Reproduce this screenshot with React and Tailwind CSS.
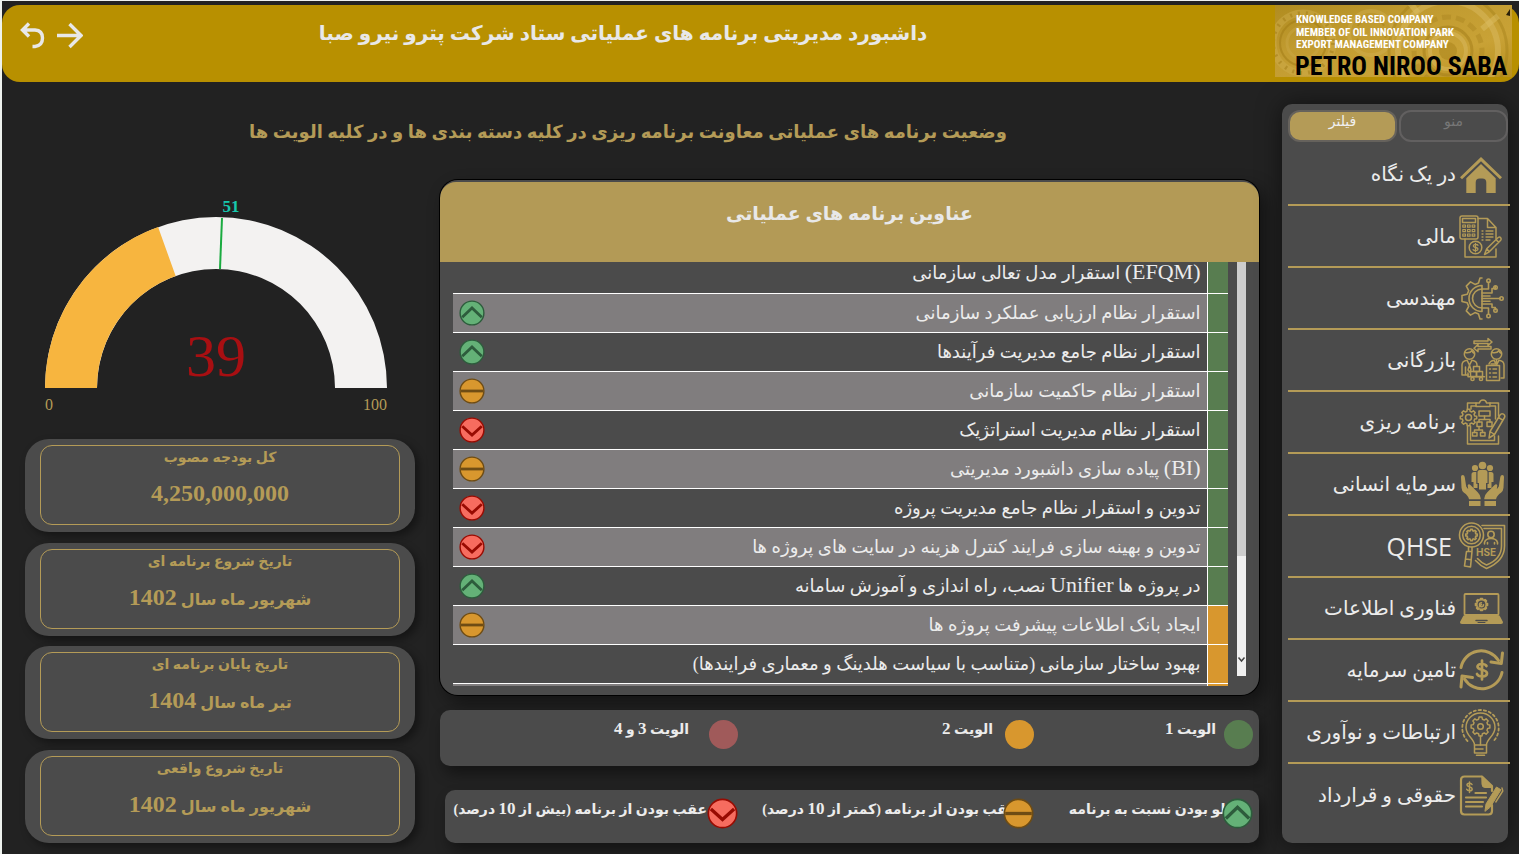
import React from "react";

const GOLD = "#b49b57";

function Latin({ children, className = "" }) {
  return <bdi className={"font-['Liberation_Serif',serif] leading-none " + className}>{children}</bdi>;
}

function gear(cx, cy, r, depth, teeth) {
  const pts = [];
  const step = (Math.PI * 2) / teeth;
  for (let i = 0; i < teeth; i++) {
    const a = i * step;
    [
      [-0.32, r - depth],
      [-0.2, r],
      [0.2, r],
      [0.32, r - depth],
    ].forEach(([o, rad]) => {
      pts.push((cx + Math.cos(a + o * step) * rad).toFixed(2) + "," + (cy + Math.sin(a + o * step) * rad).toFixed(2));
    });
  }
  return pts.join(" ");
}

function Icon({ children, width = 1.6 }) {
  return (
    <svg viewBox="0 0 48 48" className="size-12 shrink-0" fill="none" stroke={GOLD} strokeWidth={width} strokeLinecap="round" strokeLinejoin="round" aria-hidden="true">
      {children}
    </svg>
  );
}

const HomeIcon = () => (
  <Icon>
    <g stroke="none" fill={GOLD}>
      <path d="M23 7 2 27.300l2 1.900L23 11.200l19 18 2-1.900z" />
      <path d="M23 14 8.300 28.300V43h9.400V32.500q0-4 4-4h2.600q4 0 4 4V43h9.400V28.300z" />
    </g>
  </Icon>
);

const FinanceIcon = () => (
  <Icon width={1.5}>
    <rect x="2" y="4" width="18" height="23" rx="2" />
    <rect x="4.500" y="6.500" width="13" height="4" />
    {[13, 17.5, 22].map((y) => [4.8, 9.5, 14.2].map((x) => <rect key={x + "-" + y} x={x} y={y} width="2.600" height="2.200" strokeWidth="1.200" />))}
    <path d="M20 6.500h9.500l8.500 9v11M29.500 6.500v9H38M7 27v18h31v-8" />
    <path d="M24 19h1M28 19h7M24 22h1M28 22h7M24 25h1M28 25h7M24 28h1M28 28h4" strokeWidth="1.300" />
    <circle cx="17.500" cy="35.500" r="6.300" />
    <path d="M20 33.300c-.8-1.200-4.700-1.300-4.700.7s4.700 1 4.700 3-4 2-4.900.600M17.500 31.300v8.500" strokeWidth="1.300" />
    <path d="m26.500 42.500 2.200-5.700 11.500-11.300q1.500-1 2.500.2t0 2.500L31.300 39.800zM28.700 36.800l2.600 3M38 27.600l2.700 2.600" />
  </Icon>
);

const EngineeringIcon = () => (
  <Icon width={1.6}>
    <path d="M24 4h-2l-1.500 5-3.500 1.400-4.500-2.500-4.200 4.200 2.400 4.600-1.500 3.500L4 21.600v5.800l5.200 1.400 1.500 3.600-2.400 4.500 4.200 4.200 4.500-2.500 3.500 1.400 1.500 5h2" />
    <path d="M24 11.500a13 13 0 0 0 0 26M24 15a9.500 9.500 0 0 0 0 19M24 11.500v26" />
    <path d="M24 15h6.500V8.500M24 19h10v-4.500h3.300v-2M24 24.500h18M24 30h10v3.500h3.300v2.200M24 34h6.500v6.300M24 22h8M24 27.300h8" />
    <circle cx="30.500" cy="6.700" r="1.700" /><circle cx="37.500" cy="13.500" r="1.700" /><circle cx="43.500" cy="24.500" r="1.700" />
    <circle cx="37.500" cy="36.500" r="1.700" /><circle cx="30.500" cy="42" r="1.700" />
  </Icon>
);

const TradeIcon = () => (
  <Icon width={1.5}>
    <path d="M16 5h14V2.500L34 6l-4 3.300V7.500H16zM33 10.500H20V8.500l-4 3.800 4 3.400V13h13z" />
    <circle cx="11.500" cy="18" r="5.200" /><path d="M7 16.500q5 1 7-2 .5 2.500 2.500 2.500" />
    <circle cx="38.500" cy="18" r="5.200" /><path d="M34 16.500q5 1 7-2 .5 2.500 2.500 2.500" />
    <path d="M10 39H4V29q0-4 5-4.800l2.500 5 2.500-5q5 .8 5 4.800v1M7.500 31v8M11.500 29l-1.500 5 1.500 2 1.500-2z" />
    <path d="M31 28q1-3.200 5-3.800l2.500 5 2.500-5q5 .8 5 4.800v13h-3M38.500 24v4" />
    <rect x="28.500" y="29.500" width="13" height="15" /><path d="M31.500 33h1M35 33h3.500M31.500 37h1M35 37h3.500M31.500 41h1M35 41h3.500M33 28h4" />
    <rect x="15.500" y="30.500" width="6" height="5" /><rect x="12.500" y="35.500" width="6" height="5" /><rect x="18.500" y="35.500" width="6" height="5" />
    <path d="M10 37v3.700h16.500" /><circle cx="14.500" cy="43" r="1.600" /><circle cx="23" cy="43" r="1.600" />
  </Icon>
);

const PlanningIcon = () => (
  <Icon width={1.500}>
    <path d="M18 5H9.500v6M9.500 28v18h31V38M32 5h8.500v13M12.500 28v14.500h24V38M37.500 21V8H33M18 8h-5v3" />
    <path d="M18 8.500V5h3.500q.5-3 3.500-3t3.500 3H32v3.500z" />
    <polygon points={gear(10.5, 19.5, 8.3, 1.9, 8)} /><circle cx="10.500" cy="19.500" r="3" />
    <rect x="21" y="13" width="11" height="5" /><path d="M26.500 18v3.500M21 24v-2.500h11V24M21 29v3M16.500 34.500V32h8v2.500" />
    <rect x="19" y="24" width="5" height="4.500" /><rect x="29" y="24" width="5" height="4.500" />
    <rect x="14.500" y="34.500" width="4.500" height="3.500" /><rect x="22.500" y="34.500" width="4.500" height="3.500" />
    <path d="m31 40 1-6.500L42 17q1.500-2 3.500-.8t1 3.300L36.500 36.500zM32 33.500l4.500 3M40.500 19.500l4.300 2.700" />
  </Icon>
);

const PeopleIcon = () => (
  <Icon>
    <g stroke="none" fill={GOLD}>
      <circle cx="24.500" cy="5.500" r="3.800" /><circle cx="17" cy="8" r="3.100" /><circle cx="32" cy="8" r="3.100" />
      <path d="M19.500 12.500q0-2.500 2.500-2.500h5q2.500 0 2.500 2.500V23H28v6.500h-7V23h-1.500zM13.500 14.500q0-2.500 2.500-2.500h2.300v12h1.200v4h-4v-6h-2zM35.500 14.500q0-2.500-2.500-2.500h-2.300v12h-1.200v4h4v-6h2z" />
      <path d="M3 17q0-2 1.700-2t2 2l1.500 9.500 2 2.800-.5-4q1-2 3 0l7 7q3 3 3 6v1H11q-1-4-5-6.500-2.200-1.500-2.500-5zM46 17q0-2-1.700-2t-2 2l-1.500 9.500-2 2.800.5-4q-1-2-3 0l-7 7q-3 3-3 6v1H38q1-4 5-6.500 2.200-1.500 2.500-5z" />
      <path d="M11 41h11.500v5H11zM26.500 41H38v5H26.500z" />
    </g>
  </Icon>
);

const QhseIcon = () => (
  <Icon width={1.600}>
    <path d="M24 3.500h22.500V24q0 15-18 22.500-6-2.500-11-8" /><path d="M26 6.500h17.500V24q0 13-15 19-5-2-9-6.500" />
    <circle cx="13.500" cy="13" r="12" /><circle cx="13.500" cy="13" r="8.800" />
    <polygon points={gear(13.5, 13, 5.8, 1.3, 8)} />
    <path d="M10.500 25v4M14 25v4M8.500 29.500h5.500L12.500 45l-6-1zM8 37l5 .8" />
    <circle cx="33" cy="12.500" r="3.200" /><path d="M26.500 22v-1.500q1-4 6.500-4t6.500 4V22M29.500 22v-1.500M36.500 22v-1.500" />
    <text x="18" y="34" direction="ltr" fontSize="10" fontWeight="700" fill={GOLD} stroke="none" fontFamily="Inter, sans-serif">HSE</text>
  </Icon>
);

const LaptopIcon = () => (
  <Icon width={1.800}>
    <rect x="6.500" y="10" width="34" height="21" rx="1" />
    <path d="M5.500 31.500h36l3.500 6.500q.3 2-2 2H4q-2.300 0-2-2z" fill={GOLD} stroke="none" />
    <path d="M18 36.500h11" stroke="#4b4b4b" strokeWidth="1.500" /><path d="M20 38.500h7" stroke="#4b4b4b" strokeWidth="1" />
    <polygon points={gear(23.5, 20.5, 6, 1.3, 8)} fill={GOLD} />
    <circle cx="23.500" cy="20.500" r="3.900" fill="#4b4b4b" stroke="none" />
    <path d="m21 23 2.500-2.500m0-1.800a2 2 0 1 0 2 2" strokeWidth="1.500" />
  </Icon>
);

const CapitalIcon = () => (
  <Icon width={3}>
    <path d="M3 21.500A20.500 20.500 0 0 1 40.500 14.500M44 26.500A20.500 20.500 0 0 1 6.500 33" />
    <path d="m33 16 10.300 1.500L44.500 7M14.500 31.500 4 30 3 41" />
    <path d="M28.500 20c-1.500-2.800-9-2.800-9 .8s9.500 2.200 9.500 6.500-8.500 4-10 .7M24 14.500v19" strokeWidth="2.700" />
  </Icon>
);

const IdeaIcon = () => (
  <Icon width={1.500}>
    <path d="M9.500 33A18.500 18.500 0 0 1 4.300 20C4.300 10 12 2 22.500 2S40.700 10 40.700 20a18.500 18.500 0 0 1-5.200 13" strokeDasharray="2.300 2.800" strokeWidth="1.800" />
    <path d="M16.500 37c0-6-8.500-9-8.500-17.500a14.500 14.500 0 0 1 29 0C37 28 28.500 31 28.500 37z" />
    <polygon points={gear(22.5, 18.5, 9.5, 2, 8)} /><circle cx="22.500" cy="18.500" r="2.800" />
    <path d="M22.500 28v9M16.500 37v8h12v-8M17 41h8M18.500 47.300h8" />
  </Icon>
);

const ContractIcon = () => (
  <Icon width={2.200}>
    <path d="M34 34v6q0 3.500-3.500 3.500h-24Q3 43.500 3 40V9q0-3.500 3.500-3.500H24L34 15v5" />
    <path d="M24 5.500 34 15v1.500h-7q-3 0-3-3z" fill={GOLD} strokeWidth="1" />
    <path d="M17.500 22H28M8 26.500h20M8 31h17M8 35.500h16" />
    <path d="M14 13.500c-.8-1.700-5-1.700-5 .5s5.200 1.400 5.200 3.900-4.700 2.300-5.500.3M11.500 11v10.500" strokeWidth="1.500" />
    <path d="m27 40 1-7 10.500-17 4.500 2.800-10.500 17z" fill={GOLD} strokeWidth="1" /><path d="m44 17 .8 3-7 11" strokeWidth="1.400" />
  </Icon>
);

const MENU = [
  ["در یک نگاه", HomeIcon],
  ["مالی", FinanceIcon],
  ["مهندسی", EngineeringIcon],
  ["بازرگانی", TradeIcon],
  ["برنامه ریزی", PlanningIcon],
  ["سرمایه انسانی", PeopleIcon],
  ["QHSE", QhseIcon],
  ["فناوری اطلاعات", LaptopIcon],
  ["تامین سرمایه", CapitalIcon],
  ["ارتباطات و نوآوری", IdeaIcon],
  ["حقوقی و قرارداد", ContractIcon],
];

const STATUS = {
  up: { fill: "#64b177", stroke: "#2d5c3c", d: "M3.500 18.500 14 8.500l10.500 10", label: "جلو" },
  mid: { fill: "#d8972e", stroke: "#6e4c14", d: "M2 14h24", label: "عقب کمتر از 10 درصد" },
  down: { fill: "#f76c5f", stroke: "#980b02", d: "M3.500 10 14 19.500 24.500 10", label: "عقب بیش از 10 درصد" },
};

function Status({ kind, className }) {
  const s = STATUS[kind];
  return (
    <svg viewBox="0 0 28 28" className={className} fill="none" stroke={s.stroke} role="img" aria-label={s.label}>
      <circle cx="14" cy="14" r="12.800" fill={s.fill} strokeWidth="1.500" />
      <path d={s.d} strokeWidth="3" />
    </svg>
  );
}

const ROWS = [
  { t: <><Latin className="text-[22px]">(EFQM)</Latin> استقرار مدل تعالی سازمانی</>, s: null, p: 1 },
  { t: "استقرار نظام ارزیابی عملکرد سازمانی", s: "up", p: 1 },
  { t: "استقرار نظام جامع مدیریت فرآیندها", s: "up", p: 1 },
  { t: "استقرار نظام حاکمیت سازمانی", s: "mid", p: 1 },
  { t: "استقرار نظام مدیریت استراتژیک", s: "down", p: 1 },
  { t: <><Latin className="text-[22px]">(BI)</Latin> پیاده سازی داشبورد مدیریتی</>, s: "mid", p: 1 },
  { t: "تدوین و استقرار نظام جامع مدیریت پروژه", s: "down", p: 1 },
  { t: "تدوین و بهینه سازی فرایند کنترل هزینه در سایت های پروژه ها", s: "down", p: 1 },
  { t: <>در پروژه ها <Latin className="text-[22px]">Unifier</Latin> نصب، راه اندازی و آموزش سامانه</>, s: "up", p: 1 },
  { t: "ایجاد بانک اطلاعات پیشرفت پروژه ها", s: "mid", p: 2 },
  { t: "بهبود ساختار سازمانی (متناسب با سیاست هلدینگ و معماری فرایندها)", s: null, p: 2 },
];

const CARDS = [
  ["کل بودجه مصوب", <Latin className="text-[24px]">4,250,000,000</Latin>],
  ["تاریخ شروع برنامه ای", <>شهریور ماه سال <Latin className="text-[24px]">1402</Latin></>],
  ["تاریخ پایان برنامه ای", <>تیر ماه سال <Latin className="text-[24px]">1404</Latin></>],
  ["تاریخ شروع واقعی", <>شهریور ماه سال <Latin className="text-[24px]">1402</Latin></>],
];

function Logo() {
  return (
    <svg viewBox="0 0 237 72" className="h-[72px] w-[237px] shrink-0 overflow-visible" role="img" aria-label="Petro Niroo Saba">
      <defs>
        <linearGradient id="plate" x1="0" x2="1" y1="0" y2="1">
          <stop offset="0" stopColor="#b08c20" />
          <stop offset=".35" stopColor="#c19b30" />
          <stop offset=".7" stopColor="#c9a236" />
          <stop offset="1" stopColor="#b8901f" />
        </linearGradient>
        <clipPath id="frame"><rect width="237" height="72" /></clipPath>
      </defs>
      <g clipPath="url(#frame)">
        <rect width="237" height="72" fill="url(#plate)" />
        <g fill="none">
          <circle cx="28" cy="38" r="30" stroke="#cdab4a" strokeWidth="7" opacity=".5" />
          <circle cx="28" cy="38" r="23" stroke="#9f7a14" strokeWidth="2" opacity=".5" />
          <circle cx="28" cy="38" r="16" stroke="#cdab4a" strokeWidth="3" opacity=".4" />
          <circle cx="28" cy="38" r="30" stroke="#9f7a14" strokeWidth="4" strokeDasharray="2 6" opacity=".5" />
          <circle cx="96" cy="28" r="22" stroke="#d2b256" strokeWidth="4" opacity=".4" />
          <circle cx="96" cy="28" r="15" stroke="#9f7a14" strokeWidth="2" strokeDasharray="5 4" opacity=".4" />
          <circle cx="173" cy="46" r="9" fill="#a8811a" opacity=".5" />
          <circle cx="173" cy="46" r="18" stroke="#d9ba60" strokeWidth="4" opacity=".5" />
          <circle cx="173" cy="46" r="24" stroke="#a17c17" strokeWidth="3" opacity=".5" />
          <circle cx="173" cy="46" r="34" stroke="#a8831d" strokeWidth="5" strokeDasharray="9 5" opacity=".4" />
          <circle cx="173" cy="46" r="50" stroke="#d9ba60" strokeWidth="6" opacity=".5" />
          <circle cx="173" cy="46" r="59" stroke="#a17c17" strokeWidth="3" opacity=".4" />
          <path d="m207 24 16-13M143 8l-8-10" stroke="#dcbd62" strokeWidth="6" opacity=".5" />
        </g>
        <path d="M235 4v7l-4-1z" fill="#2b210a" />
      </g>
      <g fontFamily="'Liberation Sans Narrow', 'Roboto Condensed', 'Liberation Sans', sans-serif" fontWeight="700">
        <g fill="#fff" fontSize="11">
          <text x="21" y="18">KNOWLEDGE BASED COMPANY</text>
          <text x="21" y="31">MEMBER OF OIL INNOVATION PARK</text>
          <text x="21" y="43">EXPORT MANAGEMENT COMPANY</text>
        </g>
        <text x="20" y="70" fontSize="26" fill="#000">PETRO NIROO SABA</text>
      </g>
    </svg>
  );
}

function Gauge() {
  const cx = 191, cy = 208, R = 171, r = 119;
  const arc = (from, to) => {
    const p = (v, rad) => {
      const a = Math.PI * (1 - v / 100);
      return (cx + rad * Math.cos(a)).toFixed(2) + " " + (cy - rad * Math.sin(a)).toFixed(2);
    };
    return `M${p(from, R)}A${R} ${R} 0 0 1 ${p(to, R)}L${p(to, r)}A${r} ${r} 0 0 0 ${p(from, r)}z`;
  };
  return (
    <svg viewBox="0 0 390 259" className="w-full font-['Liberation_Serif',serif]" role="img" aria-label="39 / 100">
      <path d={arc(0, 100)} fill="#f3f2f1" />
      <path d={arc(0, 39)} fill="#f7b53f" />
      <path d="M195 89 197 38" stroke="#1aab40" strokeWidth="2" />
      <text x="206" y="32" textAnchor="middle" fontSize="17" fontWeight="700" fill="#17c8ae">51</text>
      <text x="191" y="196" textAnchor="middle" fontSize="60" fill="#a80f12">39</text>
      <text x="20" y="230" fontSize="16" fill={GOLD}>0</text>
      <text x="362" y="230" textAnchor="end" fontSize="16" fill={GOLD}>100</text>
    </svg>
  );
}

export default function App() {
  return (
    <div className="flex min-h-screen flex-col border-t border-l-2 border-[#eef2ee] bg-[#222222] font-['Liberation_Serif','DejaVu_Sans',sans-serif]">
      <header className="mt-1 flex h-[77px] items-start rounded-[18px] bg-[#b89000] pr-[7px] pl-[18px]">
        <button type="button" aria-label="بازگشت" className="mt-[17px]">
          <svg viewBox="0 0 26 27" className="h-[27px] w-[26px]" fill="none" stroke="#e8e8e8" strokeWidth="3.400"><path d="m9 1.500-6.500 6.500L9 14.500M3 8h12q7.500.5 7.500 8T15 24.500h-2.500" /></svg>
        </button>
        <button type="button" aria-label="بعدی" className="mt-[17px] ml-[11px]">
          <svg viewBox="0 0 26 27" className="h-[27px] w-[26px]" fill="none" stroke="#e8e8e8" strokeWidth="3.400"><path d="M0 13.500h23M12.500 2 24 13.500 12.500 25" /></svg>
        </button>
        <h1 dir="rtl" className="mt-3 flex-1 pr-28 text-center text-[20px] leading-8 font-bold text-[#e8e8e8]">
          داشبورد مدیریتی برنامه های عملیاتی ستاد شرکت پترو نیرو صبا
        </h1>
        <Logo />
      </header>

      <div className="flex flex-1 gap-[23px] pr-[11px] pb-[11px] pl-[23px]">
        <main className="flex min-w-0 flex-1 flex-col">
          <h2 dir="rtl" className="h-[98px] pt-8 pr-7 text-center text-[18px] leading-9 font-bold text-[#b49b57]">
            وضعیت برنامه های عملیاتی معاونت برنامه ریزی در کلیه دسته بندی ها و در کلیه الویت ها
          </h2>
          <div className="flex flex-1 gap-[25px]">
            <div className="flex w-[390px] shrink-0 flex-col">
              <Gauge />
              <div className="flex flex-1 flex-col justify-between">
                {CARDS.map(([title, value], i) => (
                  <section key={i} dir="rtl" className="h-[93px] rounded-[24px] bg-[#4b4b4b] px-[15px] pt-1.5 pb-[7px] shadow-[4px_4px_8px_rgba(0,0,0,0.4)]">
                    <div className="flex h-full flex-col items-center rounded-xl border border-[#b49b57] font-bold text-[#b49b57]">
                      <h3 className="text-[14px] leading-6">{title}</h3>
                      <p className="mt-2 text-[16px] leading-9">{value}</p>
                    </div>
                  </section>
                ))}
              </div>
            </div>

            <div className="flex min-w-0 flex-1 flex-col">
              <section className="h-[515px] overflow-hidden rounded-[18px] bg-[#4b4b4b] pt-0.5 shadow-[6px_8px_18px_rgba(0,0,0,0.45)] ring-1 ring-black">
                <h2 dir="rtl" className="h-20 rounded-t-[16px] bg-[#b39a56] pt-3.5 text-center text-[19px] leading-9 font-bold text-[#e8e8e8]">
                  عناوین برنامه های عملیاتی
                </h2>
                <div className="flex gap-[9px] px-[13px]">
                  <div className="flex h-[424px] flex-1 flex-col justify-end overflow-hidden">
                    <table dir="rtl" className="w-full border-collapse">
                      <tbody>
                        {ROWS.map((row, i) => (
                          <tr key={i} className={"h-[39px] border-b border-white " + (i % 2 ? "bg-[#807d7e]" : "")}>
                            <td className={"w-[21px] border-l border-white p-0 " + (row.p === 1 ? "bg-[#587d50]" : "bg-[#d8972e]")} />
                            <td className="p-0 pr-1.5 text-right text-[18px] leading-7 whitespace-nowrap text-[#ececec]">{row.t}</td>
                            <td className="w-8 p-0">{row.s && <Status kind={row.s} className="size-[26px]" />}</td>
                          </tr>
                        ))}
                        <tr className="h-[3px] bg-[#807d7e]">
                          <td className="border-l border-white bg-[#d8972e] p-0" />
                          <td colSpan={2} className="p-0" />
                        </tr>
                      </tbody>
                    </table>
                  </div>
                  <div className="flex h-[414px] w-[9px] flex-col bg-[#f0f0f0]">
                    <div className="h-[294px] bg-[#cdcdcd]" />
                    <svg viewBox="0 0 9 9" className="mt-auto mb-3 size-[9px]" fill="none" stroke="#444" strokeWidth="1.500"><path d="m1.500 2.500 3 3.500 3-3.500" /></svg>
                  </div>
                </div>
              </section>

              <section dir="rtl" className="mt-[15px] grid h-14 grid-cols-[minmax(0,219fr)_minmax(0,296fr)_minmax(0,298fr)] items-start rounded-[10px] bg-[#4b4b4b] pt-2.5 pr-1.5 text-[14px] leading-5 font-bold text-[#ececec] shadow-[4px_8px_14px_rgba(0,0,0,0.4)]">
                <div className="flex gap-2"><span className="size-[29px] rounded-full bg-[#587d50]" /><span>الویت <Latin className="text-[17px]">1</Latin></span></div>
                <div className="flex gap-3"><span className="size-[29px] rounded-full bg-[#d8972e]" /><span>الویت <Latin className="text-[17px]">2</Latin></span></div>
                <div className="flex gap-5"><span className="size-[29px] rounded-full bg-[#a05a5a]" /><span>الویت <Latin className="text-[17px]">3</Latin> و <Latin className="text-[17px]">4</Latin></span></div>
              </section>

              <section dir="rtl" className="mt-6 ml-[5px] grid h-[53px] grid-cols-[minmax(0,219fr)_minmax(0,296fr)_minmax(0,293fr)] items-start rounded-[10px] bg-[#4b4b4b] pt-2 pr-1.5 text-[14px] leading-6 font-bold whitespace-nowrap text-[#ececec] shadow-[4px_8px_14px_rgba(0,0,0,0.4)]">
                <div className="flex"><Status kind="up" className="z-10 size-[31px] shrink-0" /><span className="-mr-3.5">جلو بودن نسبت به برنامه</span></div>
                <div className="flex"><Status kind="mid" className="z-10 size-[31px] shrink-0" /><span className="-mr-3.5">عقب بودن از برنامه (کمتر از <Latin className="text-[17px]">10</Latin> درصد)</span></div>
                <div className="flex"><Status kind="down" className="z-10 size-[31px] shrink-0" /><span>عقب بودن از برنامه (بیش از <Latin className="text-[17px]">10</Latin> درصد)</span></div>
              </section>
            </div>
          </div>
        </main>

        <aside className="mt-[22px] w-[226px] shrink-0 rounded-[10px] bg-[#4b4b4b] pt-1.5 pl-1.5 shadow-[0_0_24px_rgba(0,0,0,0.5)]">
          <div className="flex h-8 gap-0.5 text-[14px] leading-5">
            <button type="button" className="flex-1 rounded-xl border-2 border-[#66625c] bg-[#b49b57] pb-2 text-[#f0f0f0]">فیلتر</button>
            <button type="button" className="flex-1 rounded-xl border-2 border-[#626060] pb-2 text-[#777777]">منو</button>
          </div>
          <nav dir="rtl" className="-mr-0.5 pt-0.5">
            {MENU.map(([label, Glyph], i) => (
              <a key={label} href="#" className={"flex h-[62px] items-center pr-1 " + (i < MENU.length - 1 ? "border-b-2 border-[#b49b57]" : "")}>
                <Glyph />
                <span className={label === "QHSE" ? "pr-1.5 font-['Open_Sans',sans-serif] text-[25px] leading-8 text-[#ececec]" : "pr-0.5 text-[20px] leading-8 whitespace-nowrap text-[#ececec]"}>{label}</span>
              </a>
            ))}
          </nav>
        </aside>
      </div>
    </div>
  );
}
